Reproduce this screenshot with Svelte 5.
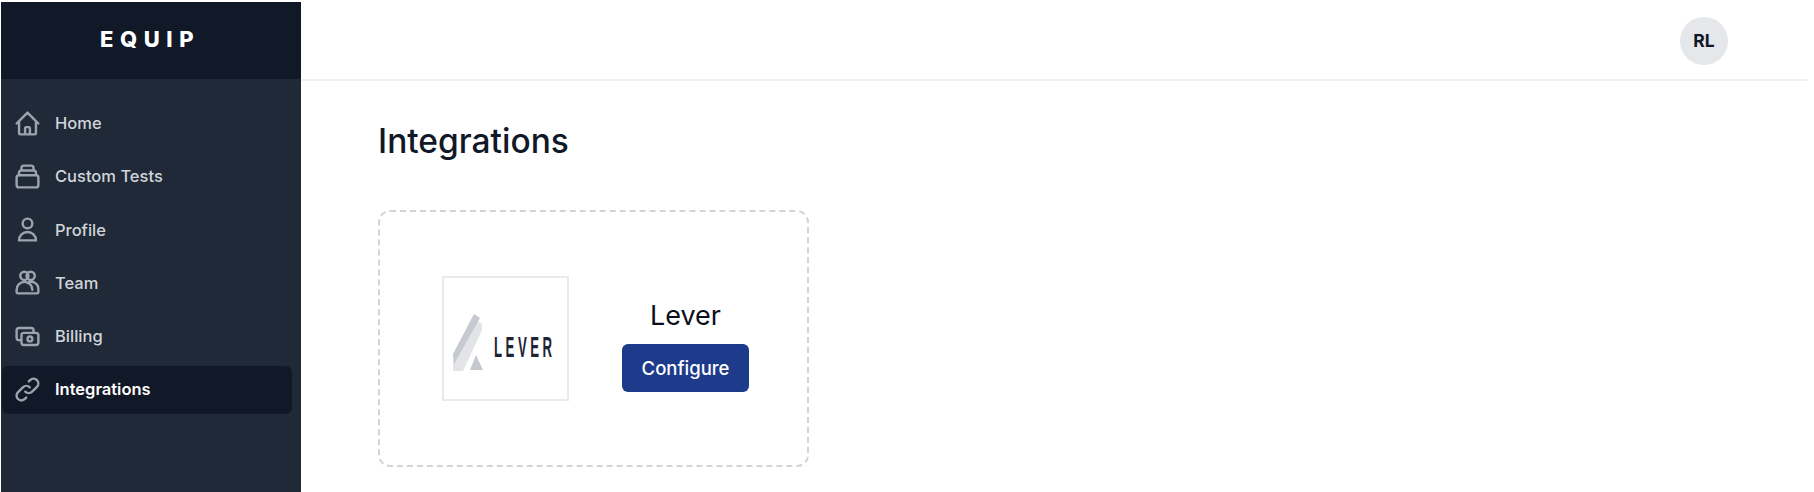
<script>
  const nav = [
    { label: 'Home', d: ['M3 12l2-2m0 0l7-7 7 7M5 10v10a1 1 0 001 1h3m10-11l2 2m-2-2v10a1 1 0 01-1 1h-3m-6 0a1 1 0 001-1v-4a1 1 0 011-1h2a1 1 0 011 1v4a1 1 0 001 1m-6 0h6'] },
    { label: 'Custom Tests', d: ['M19 11H5m14 0a2 2 0 012 2v6a2 2 0 01-2 2H5a2 2 0 01-2-2v-6a2 2 0 012-2m14 0V9a2 2 0 00-2-2M5 11V9a2 2 0 012-2m0 0V5a2 2 0 012-2h6a2 2 0 012 2v2M7 7h10'] },
    { label: 'Profile', d: ['M16 7a4 4 0 11-8 0 4 4 0 018 0zM12 14a7 7 0 00-7 7h14a7 7 0 00-7-7z'] },
    { label: 'Team', d: ['M12.800 6.500a3.400 3.400 0 11-6.800 0 3.400 3.400 0 016.800 0zM18 6.500a3.400 3.400 0 11-6.800 0 3.400 3.400 0 016.800 0zM3 20v-2a6.500 6.500 0 0113 0M12 12.300a6 6 0 019 5.700v2a1 1 0 01-1 1H4a1 1 0 01-1-1'] },
    { label: 'Billing', d: ['M17 9V7a2 2 0 00-2-2H5a2 2 0 00-2 2v6a2 2 0 002 2h2m2 4h10a2 2 0 002-2v-6a2 2 0 00-2-2H9a2 2 0 00-2 2v6a2 2 0 002 2zm7-5a2 2 0 11-4 0 2 2 0 014 0z'] },
    { label: 'Integrations', active: true, d: ['M13.828 10.172a4 4 0 00-5.656 0l-4 4a4 4 0 105.656 5.656l1.102-1.101m-.758-4.899a4 4 0 005.656 0l4-4a4 4 0 00-5.656-5.656l-1.100 1.100'] }
  ];
</script>

<div class="page">
  <aside class="sidebar">
    <div class="brand">EQUIP</div>
    <nav class="nav">
      {#each nav as item}
        <a class="item" class:active={item.active} href="#top">
          <svg class="icon" viewBox="0 0 24 24" fill="none" stroke="currentColor" stroke-width="2" stroke-linecap="round" stroke-linejoin="round">
            {#each item.d as d}<path {d} />{/each}
          </svg>
          <span>{item.label}</span>
        </a>
      {/each}
    </nav>
  </aside>
  <div class="main">
    <header class="topbar">
      <div class="avatar">RL</div>
    </header>
    <main class="content">
      <h1>Integrations</h1>
      <section class="card">
        <div class="logo">
          <svg viewBox="0 0 123 121" width="123" height="121">
            <polygon points="9,76 32,42 38,46 38,52 19,93 9,93" fill="#e3e4e7" />
            <polygon points="30,36 36,40 10,86 9,76" fill="#c6c9cf" />
            <polygon points="32,77 26,92 39,92" fill="#c5c8ce" />
            <text class="wordmark" x="0" y="0" transform="translate(50 78.500) scale(0.44 1)">LEVER</text>
          </svg>
        </div>
        <div class="info">
          <div class="name">Lever</div>
          <button class="configure">Configure</button>
        </div>
      </section>
    </main>
  </div>
</div>

<style>
  :global(body) {
    margin: 0;
    background: #fff;
  }
  .page {
    display: flex;
    width: 1806px;
    height: 490px;
    padding: 2px 0 0 1px;
    font-family: Inter, "Liberation Sans", sans-serif;
    color: #111827;
    overflow: hidden;
  }
  .sidebar {
    flex: none;
    width: 300px;
    background: #1f2937;
    display: flex;
    flex-direction: column;
  }
  .brand {
    height: 77px;
    background: #111827;
    color: #fff;
    display: flex;
    align-items: center;
    justify-content: center;
    font-size: 22px;
    font-weight: 800;
    letter-spacing: 0.3em;
    padding: 0 2px 4px 0;
    box-sizing: border-box;
  }
  .nav {
    display: flex;
    flex-direction: column;
    gap: 5.250px;
    padding: 21px 9px 0 1px;
  }
  .item {
    box-sizing: border-box;
    height: 48px;
    display: flex;
    align-items: center;
    gap: 13px;
    padding: 0 0 2px 11px;
    border-radius: 6px;
    color: #d1d5db;
    font-size: 16.500px;
    font-weight: 500;
    text-decoration: none;
  }
  .item.active {
    background: #111827;
    color: #fff;
    font-weight: 600;
  }
  .icon {
    width: 29px;
    height: 29px;
    color: #9ca3af;
    flex: none;
  }
  .main {
    flex: 1;
    min-width: 0;
    display: flex;
    flex-direction: column;
  }
  .topbar {
    box-sizing: border-box;
    height: 79px;
    display: flex;
    align-items: center;
    justify-content: flex-end;
    padding-right: 79px;
    border-bottom: 2px solid #eff0f2;
  }
  .avatar {
    width: 48px;
    height: 48px;
    border-radius: 50%;
    background: #e5e7eb;
    display: flex;
    align-items: center;
    justify-content: center;
    font-size: 17.500px;
    font-weight: 700;
  }
  .content {
    padding: 39px 0 0 77px;
  }
  h1 {
    margin: 0;
    font-size: 33.500px;
    line-height: 42px;
    font-weight: 500;
  }
  .card {
    box-sizing: border-box;
    margin-top: 48px;
    width: 431px;
    height: 257px;
    border: 2px dashed #d1d5db;
    border-radius: 12px;
    display: flex;
    align-items: center;
    gap: 53px;
    padding-left: 62px;
  }
  .logo {
    box-sizing: border-box;
    width: 127px;
    height: 125px;
    border: 2px solid #e9eaec;
    flex: none;
  }
  .logo svg {
    display: block;
  }
  .wordmark {
    font-family: "Liberation Sans", sans-serif;
    font-size: 30px;
    font-weight: 700;
    letter-spacing: 8px;
    fill: #1f2433;
  }
  .info {
    display: flex;
    flex-direction: column;
    align-items: center;
    gap: 12px;
    padding-top: 15px;
  }
  .name {
    font-size: 27px;
    line-height: 32px;
    font-weight: 400;
    color: #0b0f19;
  }
  .configure {
    width: 127px;
    height: 48px;
    border: none;
    border-radius: 6px;
    background: #1e3a8a;
    color: #fff;
    font: 500 18.500px Inter, "Liberation Sans", sans-serif;
    padding: 0;
  }
</style>
